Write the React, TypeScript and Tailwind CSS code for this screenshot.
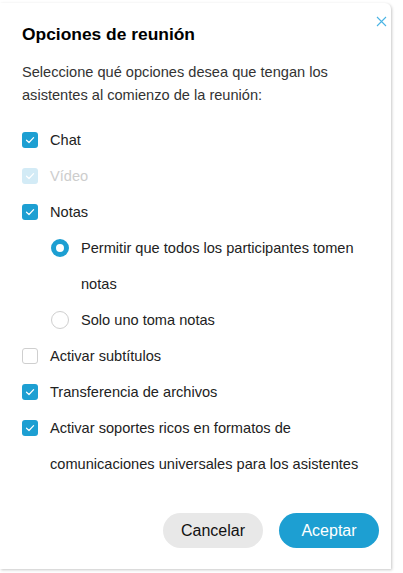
import React from 'react';

function CheckBox({ checked, disabled }: { checked?: boolean; disabled?: boolean }) {
  if (!checked) {
    return <span className="mt-[10px] h-4 w-4 shrink-0 rounded-[3px] border border-[#cfcfcf] bg-white" />;
  }
  return (
    <span
      className={`mt-[10px] flex h-4 w-4 shrink-0 items-center justify-center rounded-[3px] ${
        disabled ? 'bg-[#d3ebf6]' : 'bg-[#1d9fd2]'
      }`}
    >
      <svg width="10" height="8" viewBox="0 0 10 8" fill="none">
        <path d="M1.5 4.2 L4 6.5 L8.6 1.6" stroke="white" strokeWidth="1.2" strokeLinecap="round" strokeLinejoin="round" />
      </svg>
    </span>
  );
}

function Radio({ checked }: { checked?: boolean }) {
  return checked ? (
    <span className="mt-[9px] h-[18px] w-[18px] shrink-0 rounded-full border-[5px] border-[#1d9fd2] bg-white" />
  ) : (
    <span className="mt-[9px] h-[18px] w-[18px] shrink-0 rounded-full border border-[#cfcfcf] bg-white" />
  );
}

const rows = [
  { label: 'Chat', checked: true },
  { label: 'Vídeo', checked: true, disabled: true },
  { label: 'Notas', checked: true },
];

const rows2 = [
  { label: 'Activar subtítulos', checked: false },
  { label: 'Transferencia de archivos', checked: true },
  { label: 'Activar soportes ricos en formatos de comunicaciones universales para los asistentes', checked: true },
];

export default function App() {
  return (
    <div className="h-[573px] w-[403px] overflow-hidden bg-white pt-[3px] font-['Liberation_Sans',Arial,sans-serif]">
      <div className="relative flex h-[566px] w-[391px] flex-col rounded-tr-md bg-white pl-[22px] pr-[18px] shadow-[1px_1px_3px_rgba(0,0,0,0.22)]">
        <button className="absolute right-[4px] top-[13px] text-[#4ab4e4]">
          <svg width="11" height="11" viewBox="0 0 11 11">
            <path d="M1 1 L10 10 M10 1 L1 10" stroke="currentColor" strokeWidth="1.1" />
          </svg>
        </button>

        <h1 className="mt-[19px] text-[17.4px] font-bold leading-6 text-black">Opciones de reunión</h1>

        <p className="mt-[15px] text-[14.6px] leading-[23px] text-[#333]">
          Seleccione qué opciones desea que tengan los asistentes al comienzo de la reunión:
        </p>

        <div className="mt-[15px] flex flex-col">
          {rows.map((r) => (
            <label key={r.label} className="flex gap-3">
              <CheckBox checked={r.checked} disabled={r.disabled} />
              <span className={`text-[14.6px] leading-9 ${r.disabled ? 'text-[#cdcdcd]' : 'text-[#222]'}`}>{r.label}</span>
            </label>
          ))}

          <div className="flex flex-col pl-[29px]">
            <label className="flex gap-[12px]">
              <Radio checked />
              <span className="text-[14.6px] leading-9 text-[#222]">
                Permitir que todos los participantes tomen notas
              </span>
            </label>
            <label className="flex gap-[12px]">
              <Radio />
              <span className="text-[14.6px] leading-9 text-[#222]">Solo uno toma notas</span>
            </label>
          </div>

          {rows2.map((r) => (
            <label key={r.label} className="flex gap-3">
              <CheckBox checked={r.checked} />
              <span className="text-[14.6px] leading-9 text-[#222]">{r.label}</span>
            </label>
          ))}
        </div>

        <div className="mt-[31px] flex justify-end gap-4">
          <button className="h-[35px] w-[100px] rounded-full bg-[#e8e8e8] text-[16px] text-[#111]">Cancelar</button>
          <button className="-mr-[6px] h-[35px] w-[100px] rounded-full bg-[#1d9fd2] text-[16px] text-white">Aceptar</button>
        </div>
      </div>
    </div>
  );
}
